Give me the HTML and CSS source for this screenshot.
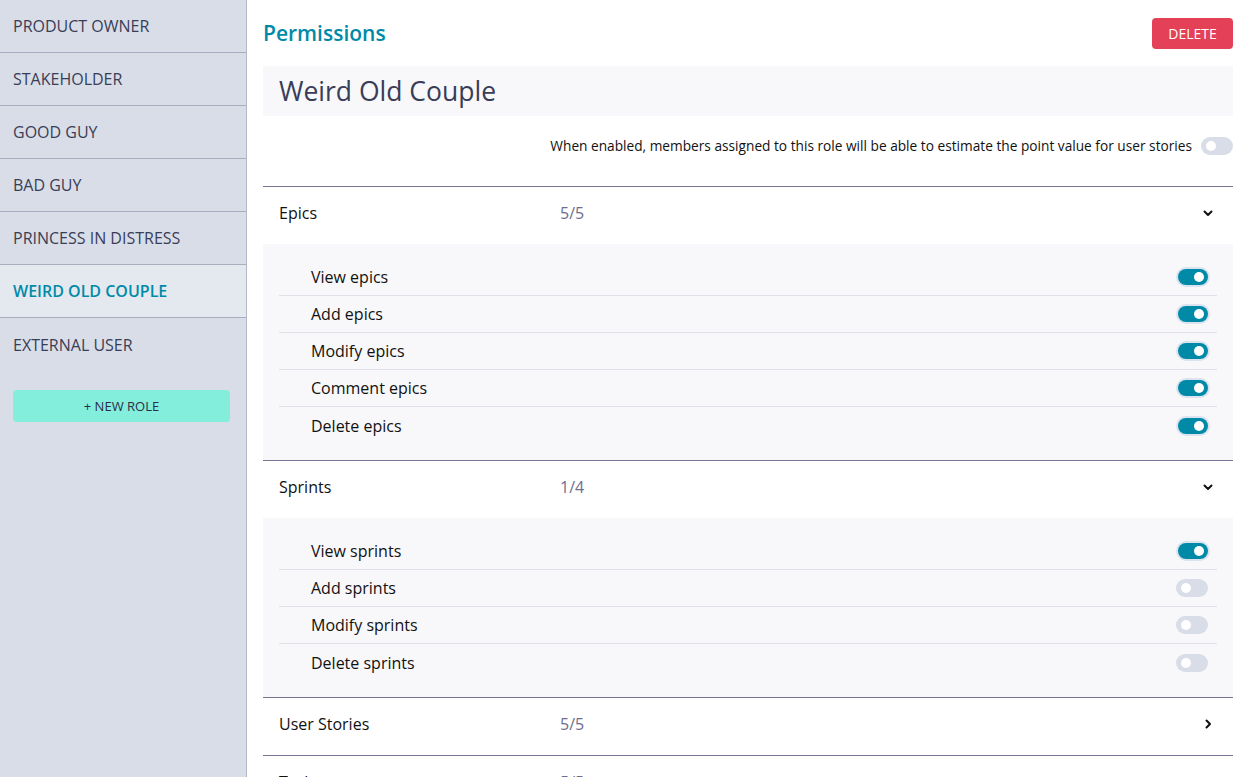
FILE: index.html
```html
<!DOCTYPE html>
<html>
<head>
<meta charset="utf-8">
<link rel="stylesheet" href="styles.css">
</head>
<body>
<div class="app">
  <aside class="sidebar">
    <div class="role">PRODUCT OWNER</div>
    <div class="role">STAKEHOLDER</div>
    <div class="role">GOOD GUY</div>
    <div class="role">BAD GUY</div>
    <div class="role">PRINCESS IN DISTRESS</div>
    <div class="role active">WEIRD OLD COUPLE</div>
    <div class="role last">EXTERNAL USER</div>
    <button class="new-role">+ NEW ROLE</button>
  </aside>
  <main class="main">
    <div class="top">
      <h1 class="title">Permissions</h1>
      <button class="delete">DELETE</button>
    </div>
    <div class="name-box">Weird Old Couple</div>
    <div class="estimate">
      <span class="est-text">When enabled, members assigned to this role will be able to estimate the point value for user stories</span>
      <span class="toggle off"></span>
    </div>

    <section class="group">
      <div class="group-head">
        <span class="g-name">Epics</span>
        <span class="g-count">5/5</span>
        <svg class="chev" width="12" height="12" viewBox="0 0 12 12"><path d="M2.5 4.5 L6 8 L9.5 4.5" fill="none" stroke="#111" stroke-width="2" stroke-linecap="round" stroke-linejoin="round"/></svg>
      </div>
      <div class="group-body">
        <div class="perm"><span>View epics</span><span class="toggle on"></span></div>
        <div class="perm"><span>Add epics</span><span class="toggle on"></span></div>
        <div class="perm"><span>Modify epics</span><span class="toggle on"></span></div>
        <div class="perm"><span>Comment epics</span><span class="toggle on"></span></div>
        <div class="perm"><span>Delete epics</span><span class="toggle on"></span></div>
      </div>
    </section>

    <section class="group">
      <div class="group-head">
        <span class="g-name">Sprints</span>
        <span class="g-count">1/4</span>
        <svg class="chev" width="12" height="12" viewBox="0 0 12 12"><path d="M2.5 4.5 L6 8 L9.5 4.5" fill="none" stroke="#111" stroke-width="2" stroke-linecap="round" stroke-linejoin="round"/></svg>
      </div>
      <div class="group-body">
        <div class="perm"><span>View sprints</span><span class="toggle on"></span></div>
        <div class="perm"><span>Add sprints</span><span class="toggle off"></span></div>
        <div class="perm"><span>Modify sprints</span><span class="toggle off"></span></div>
        <div class="perm"><span>Delete sprints</span><span class="toggle off"></span></div>
      </div>
    </section>

    <section class="group">
      <div class="group-head">
        <span class="g-name">User Stories</span>
        <span class="g-count">5/5</span>
        <svg class="chev" width="12" height="12" viewBox="0 0 12 12"><path d="M4.5 2.5 L8 6 L4.5 9.5" fill="none" stroke="#111" stroke-width="2" stroke-linecap="round" stroke-linejoin="round"/></svg>
      </div>
    </section>

    <section class="group">
      <div class="group-head">
        <span class="g-name">Tasks</span>
        <span class="g-count">5/5</span>
        <svg class="chev" width="12" height="12" viewBox="0 0 12 12"><path d="M4.5 2.5 L8 6 L4.5 9.5" fill="none" stroke="#111" stroke-width="2" stroke-linecap="round" stroke-linejoin="round"/></svg>
      </div>
    </section>
  </main>
</div>
</body>
</html>
```
FILE: styles.css
```css
* { box-sizing: border-box; }
html, body { margin: 0; padding: 0; height: 100%; overflow: hidden; }
body {
  font-family: "Open Sans", "Noto Sans", sans-serif;
  color: #111;
  background: #fff;
}
.app { display: flex; height: 777px; }
.sidebar {
  width: 247px;
  flex: none;
  background: #d8dde8;
  border-right: 1px solid #b3b8c8;
}
.role {
  height: 53px;
  display: flex;
  align-items: center;
  padding-left: 13px;
  font-size: 16px;
  color: #3a3d57;
  border-bottom: 1px solid #a8adbf;
}
.role.last { border-bottom: none; }
.role.active { background: #e4e8ef; color: #008aa8; font-weight: 600; }
.new-role {
  display: block;
  margin: 19px 0 0 13px;
  width: 217px;
  height: 32px;
  border: none;
  border-radius: 4px;
  background: #83eedb;
  color: #2b2e4a;
  font-family: inherit;
  font-size: 13px;
}
.main { flex: 1; padding: 0 16px 0 16px; min-width: 0; }
.top {
  display: flex;
  justify-content: space-between;
  align-items: center;
  height: 66px;
}
.title {
  margin: 0;
  font-size: 21px;
  font-weight: 600;
  color: #008aa8;
}
.delete {
  background: #e44057;
  color: #fff;
  border: none;
  border-radius: 4px;
  height: 31px;
  width: 81px;
  font-family: inherit;
  font-size: 14px;
  margin-top: 1px;
}
.name-box {
  height: 50px;
  background: #f8f8fa;
  padding-left: 16px;
  display: flex;
  align-items: center;
  font-size: 26.5px;
  color: #3a3d57;
}
.estimate {
  display: flex;
  justify-content: flex-end;
  align-items: flex-start;
  gap: 9px;
  height: 71px;
  padding-top: 20px;
  font-size: 13.7px;
  line-height: 20px;
  color: #111;
  border-bottom: 1px solid #757593;
}
.estimate .toggle { margin-top: 1px; }
.group { border-bottom: 1px solid #757593; }
.group-head {
  height: 57px;
  display: flex;
  align-items: center;
  padding: 0 19px 5px 16px;
  font-size: 16px;
}
.g-name { width: 281px; }
.g-count { color: #6e6e8f; flex: 1; }
.chev { flex: none; }
.group-body {
  background: #f8f8fa;
  padding: 15px 16px 16px 16px;
}
.perm {
  height: 37px;
  display: flex;
  align-items: center;
  justify-content: space-between;
  padding: 0 9px 0 32px;
  font-size: 16px;
  border-bottom: 1px solid #e0e0e8;
}
.perm:last-child { border-bottom: none; }
.toggle {
  position: relative;
  width: 30px;
  height: 16px;
  border-radius: 8px;
  flex: none;
}
.toggle.on { background: #008aa8; box-shadow: 0 0 0 2px #dbe3ef; }
.toggle.off { background: #d8dde8; width: 32px; height: 18px; border-radius: 9px; }
.toggle::after {
  content: "";
  position: absolute;
  top: 3px;
  width: 10px;
  height: 10px;
  border-radius: 50%;
  background: #fff;
}
.toggle.on::after { right: 4px; }
.toggle.off::after { left: 5px; top: 4px; }
```
